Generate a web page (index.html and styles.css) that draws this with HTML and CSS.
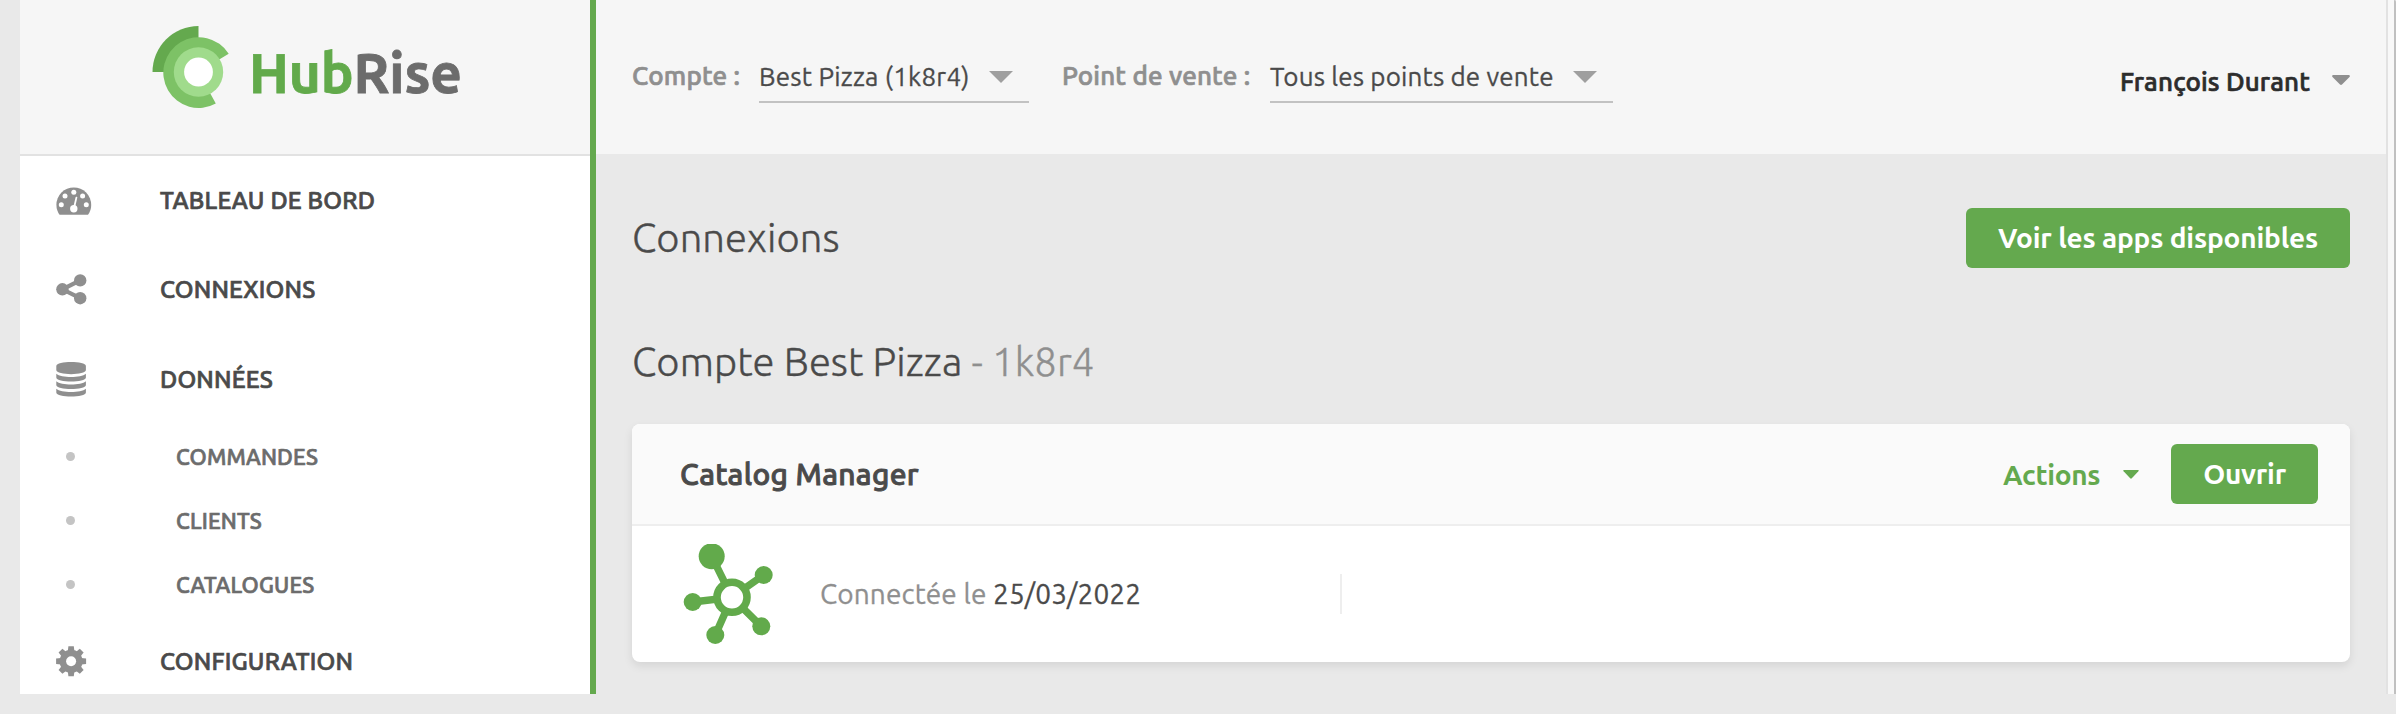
FILE: index.html
```html
<!DOCTYPE html>
<html lang="fr">
<head>
<meta charset="utf-8">
<title>HubRise - Connexions</title>
<link rel="stylesheet" href="styles.css">
</head>
<body>
<div class="app">
  <aside class="sidebar">
    <div class="brand">
      <svg class="brand-mark" width="78" height="84" viewBox="0 0 78 84">
        <path fill="#64a94e" d="M0.5 46A46 46 0 0 1 46.5 0V46Z"/>
        <path fill="#7dc266" d="M46.5 46L76.7 27.8A35.4 35.4 0 1 0 63.8 77.6Z"/>
        <circle cx="46.5" cy="46" r="24.7" fill="#a0db8c"/>
        <circle cx="46.5" cy="46" r="14.4" fill="#fff"/>
      </svg>
      <span class="brand-name">Hub<span class="brand-rise">Rise</span></span>
    </div>
    <nav class="menu">
      <a class="item">
        <svg class="icon" width="36" height="36" viewBox="0 -5 36 36">
          <path fill="#8f8f8f" d="M3.6 27.8Q0.4 23.5 0.4 17.8A17.4 17.4 0 0 1 35.2 17.8Q35.2 23.5 32 27.8Z"/>
          <g fill="#fff"><circle cx="5.3" cy="17.8" r="2.5"/><circle cx="9" cy="9" r="2.5"/><circle cx="17.8" cy="5.3" r="2.5"/><circle cx="26.6" cy="9" r="2.5"/><circle cx="30.3" cy="17.8" r="2.5"/><circle cx="17.8" cy="21.8" r="3.7"/></g>
          <path d="M18 21L20.4 10.6" stroke="#fff" stroke-width="1.8" stroke-linecap="round"/>
        </svg>
        <span>TABLEAU DE BORD</span>
      </a>
      <a class="item item-tall">
        <svg class="icon" width="36" height="36" viewBox="0 0 36 36">
          <path d="M24.2 9.4L6.4 18.3L24.2 27.2" fill="none" stroke="#8f8f8f" stroke-width="4.2"/>
          <g fill="#8f8f8f"><circle cx="6.4" cy="18.3" r="6.2"/><circle cx="24.2" cy="9.4" r="6.2"/><circle cx="24.2" cy="27.2" r="6.2"/></g>
        </svg>
        <span>CONNEXIONS</span>
      </a>
      <a class="item item-tall">
        <svg class="icon" width="36" height="36" viewBox="0 0 36 36">
          <g fill="#8f8f8f">
            <path d="M0.3 5C0.3-0.300 29.900-0.300 29.900 5V9C29.900 14.500 0.300 14.500 0.300 9Z"/>
            <path id="band" d="M0.3 12.700C5 17 25.200 17 29.900 12.700V16.400C29.900 21.900 0.300 21.900 0.300 16.400Z"/>
            <use href="#band" y="7.500"/>
            <use href="#band" y="15"/>
          </g>
        </svg>
        <span>DONNÉES</span>
      </a>
      <a class="subitem"><i class="dot"></i><span>COMMANDES</span></a>
      <a class="subitem"><i class="dot"></i><span>CLIENTS</span></a>
      <a class="subitem"><i class="dot"></i><span>CATALOGUES</span></a>
      <a class="item item-tall">
        <svg class="icon" width="36" height="36" viewBox="-15.100 -18.300 36 36">
          <g fill="#8f8f8f">
            <path id="tooth" d="M-3.300-10L-2.700-15H2.700L3.300-10V10L2.700 15H-2.700L-3.300 10Z"/>
            <use href="#tooth" transform="rotate(45)"/>
            <use href="#tooth" transform="rotate(90)"/>
            <use href="#tooth" transform="rotate(135)"/>
            <circle r="11.500"/>
          </g>
          <circle r="5" fill="#fff"/>
        </svg>
        <span>CONFIGURATION</span>
      </a>
    </nav>
  </aside>
  <div class="page">
    <header class="topbar">
      <span class="label">Compte :</span>
      <div class="select select-account"><span class="wide">Best Pizza (1k8r4)</span><svg width="24" height="12"><path fill="#9f9f9f" d="M0 0H24L12 12Z"/></svg></div>
      <span class="label label-location">Point de vente :</span>
      <div class="select select-location"><span>Tous les points de vente</span><svg width="24" height="12"><path fill="#9f9f9f" d="M0 0H24L12 12Z"/></svg></div>
      <div class="user"><span>François Durant</span><svg width="18" height="13"><path fill="#8f8f8f" d="M1 0H17Q18.500 0.500 17.500 2L10 9.600Q9 10.500 8 9.600L0.500 2Q-0.500 0.500 1 0Z"/></svg></div>
    </header>
    <main class="content">
      <div class="title-row">
        <h1>Connexions</h1>
        <a class="button">Voir les apps disponibles</a>
      </div>
      <h2>Compte Best Pizza <span class="muted">- 1k8r4</span></h2>
      <section class="card">
        <div class="card-head">
          <h3>Catalog Manager</h3>
          <a class="actions"><span>Actions</span><svg width="16" height="9"><path fill="#64a94e" d="M0.800 0H15.200Q16.200 0.300 15.400 1.300L8.800 8.300Q8 9 7.200 8.300L0.600 1.300Q-0.200 0.300 0.800 0Z"/></svg></a>
          <a class="button">Ouvrir</a>
        </div>
        <div class="card-body">
          <svg class="app-logo" width="100" height="100" viewBox="12 14 100 100">
            <path d="M62 67.300L41.700 26.300M62 67.300L93.700 45M62 67.300L91.300 96.300M62 67.300L45.300 105M62 67.300L22.700 72" stroke="#62aa4b" stroke-width="7.400"/>
            <g fill="#62aa4b"><circle cx="41.700" cy="26.300" r="13"/><circle cx="93.700" cy="45" r="9"/><circle cx="91.300" cy="96.300" r="9"/><circle cx="45.300" cy="105" r="9"/><circle cx="22.700" cy="72" r="9"/></g>
            <circle cx="62" cy="67.300" r="15" fill="#fff" stroke="#62aa4b" stroke-width="7.600"/>
          </svg>
          <p class="status"><span class="muted">Connectée le</span> 25/03/2022</p>
        </div>
      </section>
    </main>
  </div>
  <div class="scroll-track"></div>
</div>
</body>
</html>
```
FILE: styles.css
```css
* { box-sizing: border-box; }
body {
  margin: 0;
  background: #e9e9e9;
  color: #4a4a4a;
  font-family: Ubuntu, "Noto Sans", "Open Sans", sans-serif;
  -webkit-text-stroke: .3px currentColor;
}
h1, h2, h3, p { margin: 0; }
svg { display: block; flex: none; }
.app { display: flex; height: 694px; padding-left: 20px; overflow: hidden; }

/* Sidebar */
.sidebar { width: 576px; flex: none; background: #fff; border-right: 6px solid #64a94e; overflow: hidden; }
.brand { display: flex; height: 156px; padding: 26px 0 0 132px; background: #f6f6f6; border-bottom: 2px solid #e2e2e2; }
.brand-name { margin-left: 19px; line-height: 93px; font-size: 55px; font-weight: 700; letter-spacing: -.2px; color: #62aa4b; white-space: nowrap; -webkit-text-stroke: .8px #62aa4b; }
.brand-rise { color: #6c6c6c; -webkit-text-stroke-color: #6c6c6c; }
.item, .subitem { display: flex; align-items: center; white-space: nowrap; font-weight: 500; -webkit-text-stroke-width: .7px; }
.item { height: 88px; padding-left: 36px; font-size: 24px; letter-spacing: .2px; }
.item-tall { height: 90px; }
.icon { margin-right: 68px; }
.subitem { height: 64px; padding-left: 46px; font-size: 22px; letter-spacing: .18px; color: #6c6c6c; -webkit-text-stroke-color: #6c6c6c; }
.dot { width: 9px; height: 9px; margin-right: 101px; border-radius: 50%; background: #c4c4c4; }

/* Top bar */
.page { flex: 1; min-width: 0; }
.topbar { display: flex; height: 154px; padding: 0 36px; background: #f6f6f6; font-size: 26px; letter-spacing: .16px; white-space: nowrap; }
.label { width: 127px; line-height: 152px; font-weight: 500; color: #8f8f8f; -webkit-text-stroke: .7px #8f8f8f; }
.label-location { width: 208px; margin-left: 33px; }
.select { display: flex; align-items: center; justify-content: space-between; height: 52px; margin-top: 51px; padding-right: 16px; border-bottom: 2px solid #c2c2c2; }
.select-account { width: 270px; }
.select-location { width: 343px; }
.select svg { margin-bottom: -2px; }
.wide { letter-spacing: .22px; }
.user { display: flex; align-items: center; gap: 22px; margin-left: auto; height: 163px; font-weight: 500; color: #2c2c2c; -webkit-text-stroke: .7px #2c2c2c; }

/* Content */
.content { padding: 54px 36px 0; }
.title-row { display: flex; align-items: center; justify-content: space-between; height: 60px; }
h1, h2 { font-size: 40px; font-weight: 300; line-height: 60px; letter-spacing: .06px; -webkit-text-stroke-width: .4px; }
h2 { margin-top: 64px; }
.muted { color: #8f8f8f; -webkit-text-stroke-color: #8f8f8f; }
.button { height: 60px; padding: 0 32px; border-radius: 6px; background: #64a94e; color: #fff; font-size: 28px; font-weight: 600; line-height: 60px; letter-spacing: -.17px; -webkit-text-stroke: 0; }
.card { height: 238px; margin-top: 32px; border-radius: 8px; background: #fff; box-shadow: 0 4px 10px rgba(0, 0, 0, .09); }
.card-head { display: flex; align-items: center; height: 102px; padding: 0 32px 0 48px; border-bottom: 2px solid #eee; border-radius: 8px 8px 0 0; background: #fafafa; }
h3 { font-size: 30px; font-weight: 500; letter-spacing: .3px; -webkit-text-stroke-width: .9px; }
.actions { display: flex; align-items: center; gap: 23px; margin: 0 32px 0 auto; color: #64a94e; font-size: 28px; font-weight: 600; letter-spacing: -.33px; -webkit-text-stroke: 0; }
.card-body { display: flex; align-items: center; height: 136px; padding-left: 50px; }
.status { width: 522px; height: 40px; margin-left: 38px; border-right: 2px solid #eee; font-size: 28px; line-height: 40px; letter-spacing: .12px; }
.scroll-track { width: 10px; flex: none; background: #f8f8f8; border-left: 2px solid #e2e2e2; border-right: 2px solid #c0c0c0; border-top-right-radius: 2px; }
```
